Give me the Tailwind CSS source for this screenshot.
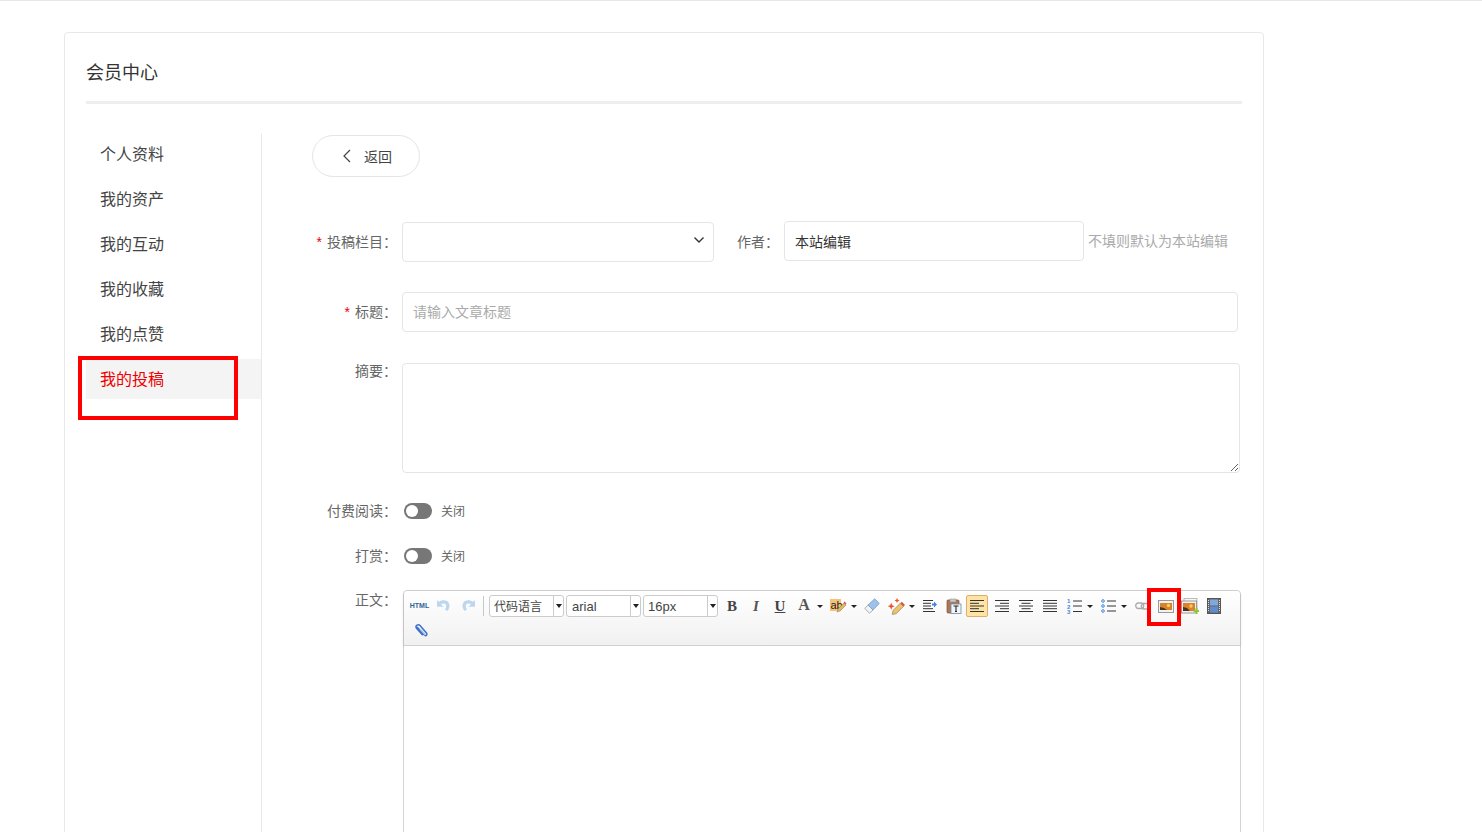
<!DOCTYPE html>
<html lang="zh-CN">

<head>
    <meta charset="UTF-8">
    <meta name="viewport" content="width=device-width, initial-scale=1.0">
    <title>会员中心</title>
    <script src="https://cdn.jsdelivr.net/npm/@tailwindcss/browser@4"></script>
</head>

<body class="bg-white font-['Liberation_Sans','Noto_Sans_CJK_SC',sans-serif]">
<div class="relative h-[832px] overflow-hidden border-t border-[#e8e8e8]">
    <!-- Card -->
    <div class="ml-16 mt-[31px] w-[1200px] h-[900px] border border-[#e8e8e8] rounded-[4px] px-[21px]">
        <!-- Title -->
        <div class="h-[71px] pt-[12px] flex items-center border-b-[3px] border-[#eeeeee] text-[18px] text-[#333]">会员中心</div>

        <div class="flex mt-[30px]">
            <!-- Sidebar -->
            <div class="w-[176px] h-[800px] shrink-0 border-r border-[#e8e8e8] text-[16px] text-[#444]">
                <div class="h-10 mb-[5px] pl-[14px] pt-[2px] flex items-center">个人资料</div>
                <div class="h-10 mb-[5px] pl-[14px] pt-[2px] flex items-center">我的资产</div>
                <div class="h-10 mb-[5px] pl-[14px] pt-[2px] flex items-center">我的互动</div>
                <div class="h-10 mb-[5px] pl-[14px] pt-[2px] flex items-center">我的收藏</div>
                <div class="h-10 mb-[5px] pl-[14px] pt-[2px] flex items-center">我的点赞</div>
                <div class="h-10 mb-[5px] pl-[14px] pt-[2px] flex items-center bg-[#f4f4f4] text-[#f00000]">我的投稿</div>
            </div>

            <!-- Form -->
            <div class="pl-[50px] pt-px text-[14px] text-[#666]">
                <div class="w-[108px] h-[42px] border border-[#e5e5e5] rounded-full flex items-center pl-[29px]">
                    <svg class="w-[10px] h-[14px]" viewBox="0 0 10 14" fill="none" stroke="#444" stroke-width="1.2"><path d="M8 1L2 7l6 6"/></svg>
                    <span class="ml-[12px] pt-[2px] text-[#444]">返回</span>
                </div>

                <div class="flex items-center mt-[45px]">
                    <label class="w-[85px] text-right shrink-0"><span class="text-[#f00000] mr-[5px]">*</span>投稿栏目：</label>
                    <div class="relative ml-[5px] w-[312px] h-10">
                        <select class="appearance-none w-full h-full border border-[#e5e5e5] rounded-[4px] bg-white"></select>
                        <svg class="absolute right-[9px] top-[14px] w-[12px] h-[8px]" viewBox="0 0 12 8" fill="none" stroke="#333" stroke-width="1.4"><path d="M1.5 1.5L6 6l4.500-4.500"/></svg>
                    </div>
                    <label class="ml-[23px]">作者：</label>
                    <input class="ml-[5px] -mt-[2px] w-[300px] h-10 px-[10px] border border-[#e5e5e5] rounded-[4px] text-[#333]" value="本站编辑">
                    <span class="ml-[4px] -mt-[2px] text-[#aaa]">不填则默认为本站编辑</span>
                </div>

                <div class="flex items-center mt-[30px]">
                    <label class="w-[85px] text-right shrink-0"><span class="text-[#f00000] mr-[5px]">*</span>标题：</label>
                    <input class="ml-[5px] w-[836px] h-10 px-[10px] border border-[#e5e5e5] rounded-[4px] placeholder:text-[#aaa]" placeholder="请输入文章标题">
                </div>

                <div class="flex items-start mt-[31px]">
                    <label class="w-[85px] text-right shrink-0 leading-4">摘要：</label>
                    <textarea class="ml-[5px] w-[838px] h-[110px] border border-[#e5e5e5] rounded-[4px] block"></textarea>
                </div>

                <div class="flex items-center mt-[30px] h-4">
                    <label class="w-[85px] text-right shrink-0">付费阅读：</label>
                    <div class="ml-[7px] w-7 h-4 rounded-full bg-[#777] p-[2px]"><div class="w-3 h-3 rounded-full bg-white"></div></div>
                    <span class="ml-[9px] pt-[2px] text-[12px]">关闭</span>
                </div>

                <div class="flex items-center mt-[29px] h-4">
                    <label class="w-[85px] text-right shrink-0">打赏：</label>
                    <div class="ml-[7px] w-7 h-4 rounded-full bg-[#777] p-[2px]"><div class="w-3 h-3 rounded-full bg-white"></div></div>
                    <span class="ml-[9px] pt-[2px] text-[12px]">关闭</span>
                </div>

                <div class="flex items-start mt-[26px]">
                    <label class="w-[85px] text-right shrink-0 leading-5">正文：</label>
                    <!-- Editor -->
                    <div class="ml-[6px] w-[838px] h-[400px] border border-[#d4d4d4] rounded-[4px] shrink-0">
                        <div class="h-[55px] pt-[3px] pl-[3px] flex flex-wrap content-start bg-gradient-to-b from-white to-[#f1f1f1] border-b border-[#d0d0d0] shadow-[0_1px_3px_rgba(0,0,0,0.2)] rounded-t-[4px]">
                            <div class="w-[25px] h-6 flex items-center justify-center text-[7px] font-bold text-[#2f6496]">HTML</div>
                            <div class="w-6 h-6 flex items-center justify-center">
                                <svg class="w-4 h-4" viewBox="0 0 16 16"><path d="M1 2l1.800 1.800C5 2.200 8 1.600 10.500 2.800c3.500 1.700 4 6.500 1 10.200l-2.500-1.600c1.700-2.300 1.600-4.700 0-5.600-1.300-.7-2.800-.5-4 .4L7.500 8.800H1z" fill="#bcd6ee"/></svg>
                            </div>
                            <div class="w-6 h-6 flex items-center justify-center">
                                <svg class="w-4 h-4" viewBox="0 0 16 16"><path d="M15 2l-1.800 1.800C11 2.200 8 1.600 5.500 2.800c-3.500 1.700-4 6.500-1 10.200l2.500-1.600c-1.700-2.300-1.600-4.700 0-5.600 1.300-.7 2.800-.5 4 .4L8.500 8.800H15z" fill="#bcd6ee"/></svg>
                            </div>
                            <div class="ml-[3px] mr-[5px] mt-[2px] w-px h-5 bg-[#c8c8c8]"></div>

                            <div class="mt-px w-[75px] h-[22px] flex border border-[#ccc] rounded-[3px] bg-white text-[12px] text-[#444] items-center">
                                <span class="w-[64px] pl-[4px] pt-px border-r border-[#ccc] leading-5">代码语言</span>
                                <span class="ml-[2px] border-x-[3px] border-t-[4px] border-x-transparent border-t-[#222]"></span>
                            </div>
                            <div class="mt-px ml-[2px] w-[75px] h-[22px] flex border border-[#ccc] rounded-[3px] bg-white text-[13px] text-[#444] items-center">
                                <span class="w-[64px] pl-[5px] pt-px border-r border-[#ccc] leading-5">arial</span>
                                <span class="ml-[2px] border-x-[3px] border-t-[4px] border-x-transparent border-t-[#222]"></span>
                            </div>
                            <div class="mt-px ml-[2px] mr-[2px] w-[75px] h-[22px] flex border border-[#ccc] rounded-[3px] bg-white text-[13px] text-[#444] items-center">
                                <span class="w-[64px] pl-[4px] pt-px border-r border-[#ccc] leading-5">16px</span>
                                <span class="ml-[2px] border-x-[3px] border-t-[4px] border-x-transparent border-t-[#222]"></span>
                            </div>

                            <div class="w-6 h-6 flex items-center justify-center font-['Liberation_Serif',serif] font-bold text-[15px] text-[#444]">B</div>
                            <div class="w-6 h-6 flex items-center justify-center font-['Liberation_Serif',serif] font-bold italic text-[15px] text-[#555]">I</div>
                            <div class="w-6 h-6 flex items-center justify-center font-['Liberation_Serif',serif] font-bold underline text-[15px] text-[#444]">U</div>
                            <div class="w-6 h-6 flex items-center justify-center font-['Liberation_Serif',serif] font-bold text-[16px] text-[#555] pb-[2px]">A</div>
                            <div class="w-[10px] h-6 flex items-center"><span class="ml-[1px] border-x-[3px] border-t-[3px] border-x-transparent border-t-[#222]"></span></div>

                            <!-- highlight -->
                            <div class="w-6 h-6 flex items-center justify-center">
                                <svg class="w-[18px] h-4" viewBox="0 0 18 16"><rect x="1" y="1" width="11" height="12" fill="#f6c27a"/><text x="1.500" y="10.500" font-size="11" font-family="Liberation Sans" fill="#222">ab</text><path d="M8 14l1-3 6-6 2 2-6 6z" fill="#e8b850" stroke="#777" stroke-width=".5"/><path d="M14.500 4.500l1-1 2 2-1 1z" fill="#e05050"/></svg>
                            </div>
                            <div class="w-[10px] h-6 flex items-center"><span class="ml-[1px] border-x-[3px] border-t-[3px] border-x-transparent border-t-[#222]"></span></div>

                            <!-- eraser -->
                            <div class="w-6 h-6 flex items-center justify-center">
                                <svg class="w-4 h-4" viewBox="0 0 16 16"><path d="M.8 10.500l4.700 4.700 3.500-3.200-5-5z" fill="#f4f4f4" stroke="#999" stroke-width=".8"/><path d="M4 7l5 5 6.200-6.500-4.500-4.700z" fill="#9cc2ee" stroke="#7a9ec8" stroke-width=".8"/></svg>
                            </div>
                            <!-- wand -->
                            <div class="w-6 h-6 flex items-center justify-center">
                                <svg class="w-[17px] h-[17px]" viewBox="0 0 16 16"><path d="M4 15.500l.8-3.800 6.700-6.700 3 3-6.700 6.700z" fill="#eec26a" stroke="#9a8560" stroke-width=".7"/><path d="M11.500 5l1.500-1.500 3 3L14.500 8z" fill="#d8564a"/><path d="M3 4.500l1 2.300 2.300.9-2.300 1L3 11 2 8.700l-2.300-1 2.300-.9z" fill="#e8562c"/><path d="M8.500 0l.8 1.700 1.700.7-1.700.7-.8 1.700-.8-1.700L6 2.400l1.700-.7z" fill="#e8562c"/></svg>
                            </div>
                            <div class="w-[10px] h-6 flex items-center"><span class="ml-[1px] border-x-[3px] border-t-[3px] border-x-transparent border-t-[#222]"></span></div>

                            <!-- indent -->
                            <div class="w-6 h-6 flex items-center justify-center">
                                <svg class="w-[14px] h-[12px]" viewBox="0 0 14 12"><path d="M0 .5h10M0 3.300h8M0 6h8M0 8.700h10M0 11.500h12" stroke="#333" stroke-width="1"/><path d="M9 3.500h2V1.500l3 3-3 3v-2H9z" fill="#3f86e0"/></svg>
                            </div>
                            <!-- paste -->
                            <div class="w-6 h-6 flex items-center justify-center">
                                <svg class="w-4 h-4" viewBox="0 0 16 16"><rect x="1" y="2" width="12" height="13" rx="1" fill="#a9795a" stroke="#7a5338" stroke-width=".7"/><rect x="4" y="1" width="6" height="3" fill="#c8c8c8" stroke="#888" stroke-width=".5"/><rect x="5" y="6" width="10" height="9.500" fill="#f2f6fb" stroke="#6f8ca8" stroke-width=".8"/><path d="M7.500 8h5M10 8v5.500M9 13.500h2" stroke="#222" stroke-width="1.100" fill="none"/></svg>
                            </div>
                            <!-- align left (active) -->
                            <div class="w-[22px] h-[22px] mt-px mr-[2px] flex items-center justify-center bg-[#fde4a6] border border-[#e0ae6a] rounded-[2px]">
                                <svg class="w-[14px] h-[12px]" viewBox="0 0 14 12"><path d="M0 .5h14M0 3.300h9M0 6h14M0 8.700h9M0 11.500h14" stroke="#333" stroke-width="1"/></svg>
                            </div>
                            <div class="w-6 h-6 flex items-center justify-center">
                                <svg class="w-[14px] h-[12px]" viewBox="0 0 14 12"><path d="M0 .5h14M5 3.300h9M0 6h14M5 8.700h9M0 11.500h14" stroke="#333" stroke-width="1"/></svg>
                            </div>
                            <div class="w-6 h-6 flex items-center justify-center">
                                <svg class="w-[14px] h-[12px]" viewBox="0 0 14 12"><path d="M0 .5h14M2.500 3.300h9M0 6h14M2.500 8.700h9M0 11.500h14" stroke="#333" stroke-width="1"/></svg>
                            </div>
                            <div class="w-6 h-6 flex items-center justify-center">
                                <svg class="w-[14px] h-[12px]" viewBox="0 0 14 12"><path d="M0 .5h14M0 3.300h14M0 6h14M0 8.700h14M0 11.500h14" stroke="#333" stroke-width="1"/></svg>
                            </div>
                            <!-- ordered list -->
                            <div class="w-6 h-6 flex items-center justify-center">
                                <svg class="w-[15px] h-4" viewBox="0 0 15 16"><g font-size="6" font-weight="bold" font-family="Liberation Sans" fill="#3f86e0"><text x="0" y="5">1</text><text x="0" y="10.500">2</text><text x="0" y="16">3</text></g><path d="M6 3h9M6 8h9M6 13.500h9" stroke="#333" stroke-width="1"/></svg>
                            </div>
                            <div class="w-[10px] h-6 flex items-center"><span class="ml-[1px] border-x-[3px] border-t-[3px] border-x-transparent border-t-[#222]"></span></div>
                            <!-- unordered list -->
                            <div class="w-6 h-6 flex items-center justify-center">
                                <svg class="w-[15px] h-[14px]" viewBox="0 0 15 14" fill="none"><g stroke="#3f86e0" stroke-width="1"><circle cx="2" cy="2" r="1.300"/><circle cx="2" cy="7" r="1.300"/><circle cx="2" cy="12" r="1.300"/></g><path d="M6 2h9M6 7h9M6 12h9" stroke="#333" stroke-width="1"/></svg>
                            </div>
                            <div class="w-[10px] h-6 flex items-center"><span class="ml-[1px] border-x-[3px] border-t-[3px] border-x-transparent border-t-[#222]"></span></div>
                            <!-- link -->
                            <div class="w-6 h-6 flex items-center justify-center">
                                <svg class="w-[15px] h-2" viewBox="0 0 15 8" fill="none" stroke="#aaa" stroke-width="1.300"><rect x=".7" y="1" width="8" height="5.500" rx="2.700"/><rect x="6.300" y="1.500" width="8" height="5.500" rx="2.700"/></svg>
                            </div>
                            <!-- image -->
                            <div class="w-6 h-6 flex items-center justify-center">
                                <svg class="w-4 h-[13px]" viewBox="0 0 16 13"><rect x=".5" y=".5" width="15" height="12" fill="#f2f2f2" stroke="#999"/><rect x="2" y="3" width="12" height="7" fill="#d9822b"/><circle cx="10.500" cy="5.500" r="1.700" fill="#f9cf5a"/><path d="M2 7l4 1 3 2H2z" fill="#4a3420"/></svg>
                            </div>
                            <!-- multi image -->
                            <div class="w-6 h-6 flex items-center justify-center">
                                <svg class="w-[18px] h-4" viewBox="0 0 18 16"><rect x="3" y=".5" width="13" height="11" fill="#f6f6f6" stroke="#bbb"/><rect x=".5" y="3" width="15" height="12" fill="#f2f2f2" stroke="#999"/><rect x="2" y="5" width="12" height="8" fill="#d9822b"/><circle cx="10" cy="8" r="1.700" fill="#f9cf5a"/><path d="M2 9l4 1 3 3H2z" fill="#4a3420"/><path d="M12.500 12h2v-2h2v2h2v2h-2v2h-2v-2h-2z" fill="#8cc63f"/></svg>
                            </div>
                            <!-- video -->
                            <div class="w-6 h-6 flex items-center justify-center">
                                <svg class="w-[14px] h-4" viewBox="0 0 14 16"><rect x=".5" y=".5" width="13" height="15" fill="#666" stroke="#555"/><rect x="3" y="1.500" width="8" height="6" fill="#7fa8dc"/><rect x="3" y="8.500" width="8" height="6" fill="#5f8ccc"/><path d="M1.500 2v12M12.500 2v12" stroke="#ddd" stroke-dasharray="1 1"/></svg>
                            </div>
                            <!-- attachment -->
                            <div class="ml-[2px] mt-px w-6 h-6 flex items-center justify-center">
                                <svg class="w-4 h-4" viewBox="0 0 16 16" fill="none" stroke="#3f6fc8" stroke-width="1.500"><path d="M4 4l7.500 8c1.500 1.500 3.300-.3 2-2L7 2.500C5.300.8 2 2.500 3.300 5l6.500 7.300"/><path d="M7 6l5.500 6" stroke="#a9c9ec"/></svg>
                            </div>
                        </div>
                        <div class="h-[300px] bg-white"></div>
                    </div>
                </div>
            </div>
        </div>
    </div>

    <!-- Red annotation boxes -->
    <div class="absolute left-[78px] top-[355px] w-[160px] h-[64px] border-4 border-[#ff0000]"></div>
    <div class="absolute left-[1147px] top-[587px] w-[34px] h-[38px] border-4 border-[#ff0000]"></div>
</div>
</body>

</html>
